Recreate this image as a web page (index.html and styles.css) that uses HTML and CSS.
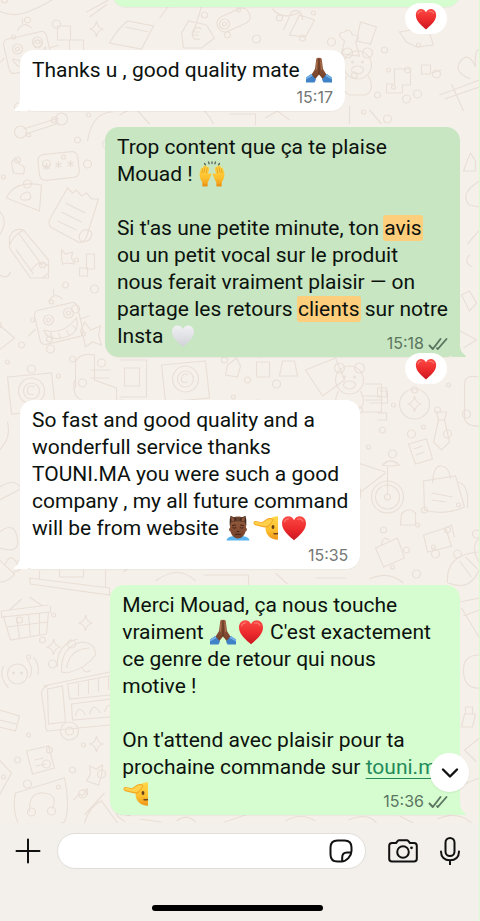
FILE: index.html
```html
<!DOCTYPE html>
<html lang="fr">
<head>
<meta charset="utf-8">
<meta name="viewport" content="width=device-width, initial-scale=1">
<title>Mouad</title>
<link rel="stylesheet" href="styles.css">
</head>
<body>
<svg class="defs" aria-hidden="true">
  <defs>
    <linearGradient id="red" x1="0" y1="0" x2="0" y2="1"><stop offset="0" stop-color="#fa4a45"/><stop offset=".5" stop-color="#ee2c2d"/><stop offset="1" stop-color="#c91620"/></linearGradient>
    <linearGradient id="white" x1="0" y1="0" x2="0" y2="1"><stop offset="0" stop-color="#f1f1f4"/><stop offset="1" stop-color="#cfd2d6"/></linearGradient>
    <linearGradient id="skin" x1="0" y1="0" x2="0" y2="1"><stop offset="0" stop-color="#9a5f3f"/><stop offset="1" stop-color="#73402a"/></linearGradient>
    <linearGradient id="gold" x1="0" y1="0" x2="0" y2="1"><stop offset="0" stop-color="#ffd849"/><stop offset=".6" stop-color="#fdbf2d"/><stop offset="1" stop-color="#ee9418"/></linearGradient>
    <symbol id="heart" viewBox="0 0 26 26"><path fill="url(#red)" d="M13 25.300C9 21.500 1 16 1 8.500C1 4.200 3.800 1.200 7.200 1.200C9.800 1.200 12 2.800 13 5.200C14 2.800 16.200 1.200 18.800 1.200C22.200 1.200 25 4.200 25 8.500C25 16 17 21.500 13 25.300Z"/><path d="M3.500 7c.5-2 2-3.200 4-3.200M16.500 4.200c2-1 4.500 0 5.500 2" fill="none" stroke="#ff8d85" stroke-width="1.200" stroke-linecap="round" opacity=".7"/></symbol>
    <symbol id="heart-white" viewBox="0 0 26 26"><path fill="url(#white)" d="M13 24C9 20.500 2 15.500 2 8.800C2 5 4.500 2.500 7.700 2.500C10 2.500 12 3.800 13 6C14 3.800 16 2.500 18.300 2.500C21.500 2.500 24 5 24 8.800C24 15.500 17 20.500 13 24Z"/></symbol>
    <symbol id="pray" viewBox="0 0 26 26">
      <path fill="url(#skin)" d="M12.800 1C11.500.2 10.400 1 10.200 2.500L9 12L5 18.500L8.500 23L13 17.500L17.500 23L21 18.500L17 12L15.800 2.500C15.600 1 14.300.2 13 1Z"/>
      <path d="M13 1.500V17.500" stroke="#522b1b" stroke-width=".9"/><path d="M11 4.500L10.300 13M15 4.500L15.700 13" stroke="#b9805b" stroke-width=".7"/>
      <path fill="#3f82c8" d="M5.200 17L10 22.500L8.500 25.500H0V20.500ZM20.800 17L16 22.500L17.500 25.500H26V20.500Z"/><path fill="#75b0e5" d="M5.200 17L0 20.500V22.500L6.500 19ZM20.800 17L26 20.500V22.500L19.500 19Z"/>
    </symbol>
    <symbol id="raised" viewBox="0 0 26 26">
      <path stroke="#59645b" stroke-width="1.300" stroke-linecap="round" d="M5.500 2.500l1 1.400M9.500 1l.6 1.800M13 .8v1.800M16.500 1l-.6 1.800M20.500 2.500l-1 1.400"/>
      <path id="raised-hand" fill="url(#gold)" d="M3.500 25.500L3 20.500C1 18 .2 15 .7 12L2 7.200C2.300 6 3.700 6.200 3.600 7.500L4.500 5C4.900 3.900 6.400 4.200 6.200 5.400L7.300 4.900C8.200 4.700 8.600 5.500 8.400 6.400L9.500 6.300C10.300 6.400 10.400 7 10.200 7.800L9 13L10.800 12.400C12.300 12.200 12.700 13.200 12 14.200C10.800 16.500 10.500 19 8.800 21L8.500 25.500Z"/>
      <use href="#raised-hand" transform="translate(26 0) scale(-1 1)"/>
      <path fill="none" stroke="#d88b18" stroke-width=".6" d="M3.600 7.500L2.900 12M6.200 5.400L5 11.500M8.400 6.400L7.200 12M22.400 7.500l.7 4.500M19.800 5.400L21 11.500M17.600 6.400l1.200 5.600M3.500 24h5M17.500 24h5"/>
    </symbol>
    <symbol id="facepalm" viewBox="0 0 26 26">
      <path fill="#59b3ee" d="M1.500 25.500C2 22.500 5 21.500 9 21H17C21 21.500 24 22.500 24.500 25.500Z"/>
      <path fill="#3d86ce" d="M8.500 21.200Q13 25.500 17.500 21.200L16.500 20H9.500Z"/>
      <path fill="url(#skin)" d="M5 8C5 3.500 8 1.500 13 1.500S21 3.500 21 8V13C22.500 13 22 16.500 20.500 16.500C19.500 20.500 16.500 23.500 13 23.500S6.500 20.500 5.500 16.500C4 16.500 3.500 13 5 13Z"/>
      <path fill="#43291f" d="M4.700 11V5L5.500.7L9.500 2.500H16.500L20.500.7L21.300 5V11L19.500 6.500H6.500Z"/>
      <path fill="#8b563b" d="M6.200 4V1.500L9.300 3.500V6H6.500ZM19.800 4V1.500L16.700 3.500V6H19.500Z"/>
      <path fill="none" stroke="#402117" stroke-width="1" stroke-linecap="round" d="M7.500 10.500l3-.4M15.500 10.100l3 .4M7.800 12.800q1.500 1 3 0M15.200 12.800q1.500 1 3 0M12 16.500q1 .6 2 0M10.500 19.500q2.500-1 5 0"/>
      <path d="M11 4h4M10.500 6h5" stroke="#985f42" stroke-width=".8"/>
    </symbol>
    <symbol id="salute" viewBox="0 0 26 26">
      <path fill="url(#gold)" d="M25 1.300C17 1.300 12.500 6.500 12.500 13S17 24.800 25 24.800Z"/>
      <path fill="#f5a623" d="M.6 8.300C.2 6.800 1.200 5.700 2.700 6L9 7.200L14 3.800C16 2.700 18.500 2.900 20.500 4.500L18 9L14.500 12.400L10.500 12.200L2.300 10.200C1.400 9.900.8 9.200.6 8.300Z"/>
      <path fill="#ffd04a" d="M1.400 7.900C1.300 7 2 6.600 2.900 6.800L9.300 8L14.300 4.700C16.200 3.700 18 3.800 19.500 4.800L17.300 8.500L14 11.200L10.500 11L2.600 9.200C2 9 1.500 8.500 1.400 7.900Z"/>
      <ellipse cx="20" cy="12" rx="1.400" ry="2" fill="#65401a"/><path d="M20.500 18.500Q22.500 19 25 18.500" fill="none" stroke="#75451a" stroke-width="1.300"/>
    </symbol>
    <symbol id="ticks" viewBox="0 0 20 14"><path fill="none" stroke="currentColor" stroke-width="1.900" stroke-linecap="round" stroke-linejoin="round" d="M1.500 8.500L4.800 12L12.500 2M9 11.200L9.800 12L18.500 2"/></symbol>

    <g id="star"><path d="M0-8Q1-1 7 0Q1 1 0 8Q-1 1-7 0Q-1-1 0-8Z"/></g>
    <g id="paper"><path d="M-8-25l5 5 4-3 5 6 5-3 5 6 7 0L11 24Q7 33-1 27L-25 14Q-28 9-25 5ZM-10-10L10 0M-14-1L6 9M-18 8L1 17M8 17q10-1 8 6t-11 5q-4-6 3-11"/></g>
    <g id="pencil"><path d="M-22-18Q-18-28-8-25L17 5V23H-1L-22-7ZM-13-22L11 11M-22-10Q-18-20-8-25M-16-6L2 19M0 15Q8 3 17 11M11 23l6-5"/></g>
    <g id="robot"><rect x="-22" y="-16" width="44" height="35" rx="5" transform="rotate(-13)"/><circle cx="-10" cy="-2" r="5"/><circle cx="10" cy="-9" r="5"/><circle cx="-10" cy="-2" r="2"/><circle cx="10" cy="-9" r="2"/><path d="M-15 8Q4 14 18-4Q22 13 3 16Q-11 19-15 8M-8 10l2 6M0 11l2 5M8 8l3 6M14 3l4 5M-10-20Q-5-31 4-23M-5-27v-6M-23 7l-7 7M22-3l9-3"/></g>
    <g id="bone"><path d="M-18 8L17-3M-16 13L18 2"/><circle cx="-21" cy="11" r="6"/><circle cx="20" cy="-2" r="6"/><circle cx="-23" cy="-14" r="4"/></g>
    <g id="password"><rect x="-20" y="-12" width="40" height="26" rx="6" transform="rotate(-6)"/><path d="M-12-2v7M-15 0l6 4M-9 0l-6 4M0-4v7M-3-2l6 4M3-2l-6 4M12-5v7M9-3l6 4M15-3l-6 4"/></g>
    <g id="truck"><path d="M-38-18L38-34V20L-34 27Q-36 26-36 18L-40-10Q-40-16-34-18ZM-34-15l15-3 3 36-17 2ZM-14-20L38-30V-10L-12-5ZM-10 0L38-6V12L-9 16ZM-3-21v13M7-23v13M17-25v13M27-27v13M-6 12q3-13 10-1M8 10q4-13 11-1M23 8q4-13 11-1"/><circle cx="-12" cy="27" r="9"/><circle cx="-12" cy="27" r="4"/></g>
    <g id="basket"><path d="M-25-6L22-12M-25-6v6L24-5v-6M-23 0L-16 23L20 17L22-5M-20 10L21 5M-10 0l3 21M2-2l2 21M13-4v22M-17-7L-5-18M16-11L3-20"/></g>
    <g id="bag"><path d="M-20-12L12-17L21 14Q0 23-19 17ZM-11-10Q-10-28-2-27T7-14M14-11q12 2 10 26M-12 0L9 4M-12 7L3 9"/></g>
    <g id="camera-doodle"><path d="M-24-14L20-18L24 19L-20 23Z"/><circle r="13"/><circle r="8"/><path d="M3-4q-6-3-7 3t6 4"/></g>
    <g id="bike"><circle cx="17" cy="20" r="16"/><circle cx="17" cy="20" r="12"/><circle cx="17" cy="20" r="3"/><circle cx="-26" cy="17" r="16"/><path d="M17 18V-10M15-5L-16-15L-10 15L15-4M-10 15L-26 17L-15-15M-20-17h9M12-12Q20-20 29-12Q20-10 12-12Z"/></g>
    <g id="pizza"><path d="M-18 0Q-10-18 17-13L15 13ZM-3-3q7-6 9 0t-8 5q-4-1-1-5"/></g>
    <g id="taco"><path d="M-16 13Q-17-13 5-17Q18-16 18-4Q9 9-10 14ZM-20 8Q-22-14 0-20M-11 9Q-8-10 12-11M4 8q4 8 9 3"/></g>
    <g id="bear"><circle cy="0" r="14"/><circle cx="-10" cy="-12" r="5"/><circle cx="10" cy="-12" r="5"/><ellipse cy="5" rx="6" ry="4"/><circle cx="-5" cy="-3" r="1"/><circle cx="5" cy="-3" r="1"/><path d="M-11 11Q-18 25-8 30H8Q18 25 11 11"/></g>
    <g id="bubble-doodle"><path d="M-24-9L25-24Q31 6 25 20Q0 29-20 25Q-28 6-24-9ZM-10 10Q-11-10 4-9T13 7"/><circle cx="-8" cy="10" r="4"/><circle cx="12" cy="9" r="4"/></g>
    <g id="tag"><rect x="-17" y="-8" width="34" height="16" rx="7" transform="rotate(-24)"/><circle cx="-9" cy="4" r="5"/><circle cx="-9" cy="4" r="2"/></g>
    <g id="tie"><path d="M-5-18h10l-2 8 5 22-8 8-8-8 5-22Z M-4-10h7"/></g>
    <g id="dots"><circle cx="-25" cy="-20" r="3"/><circle cx="9" cy="-25" r="2"/><circle cx="27" cy="4" r="4"/><circle cx="-16" cy="17" r="2"/><circle cx="8" cy="24" r="4"/><circle cx="-2" cy="0" r="3"/></g>
  </defs>
</svg>

<main class="chat">
  <svg class="wallpaper" viewBox="0 0 480 823" preserveAspectRatio="xMidYMin slice" aria-hidden="true">
    <path d="M-2 10Q12 18 28 12T57-3M87 12l22-12M90 17L108 4M58 26h13v14h13v12H70V40H58ZM110 43q8-14 18-22l26 5-12 23ZM126 27l23 5M160 18l14-18 28 7-8 25M182 33l7-12 18 4 8 13-13 10H184ZM202 29q-8-4-9 4t8 6M192 32h8M192 35h7M284 30l8-18q10-5 11 8M273 9q10 12 28 3M290 35l10-20 15 5-9 17ZM361 22l16 5-6 17-14-3ZM345 41q-10-8 0-9 5-5 8 3 10 0 3 7l4 14-18-2ZM400 32l28-5 6 18-17 2-10-5ZM395 69h16v16h-8v8h-16v-9h8ZM422 65h9v9h-9ZM432 73l10-3M440 95l40-15M445 99l35-12M452 84l12 27M471 79q-20-8-8-20 7-6 13 8Q475 48 480 50"/>
    <use href="#star" x="97" y="29"/><use href="#tag" x="234" y="20"/><use href="#bear" x="358" y="65"/><use href="#robot" x="28" y="51"/>
    <use href="#bone" x="42" y="121"/><use href="#password" x="59" y="165"/><use href="#paper" x="76" y="213"/><use href="#pizza" x="25" y="198"/><use href="#pencil" x="32" y="255"/><use href="#robot" x="59" y="322"/><use href="#camera-doodle" x="32" y="391"/>
    <path d="M12 162l4-4 5 7q6 1 3 9l-10-1ZM88 141q5-29 25-29M0 211q10 11-1 25M0 275q8 5 11-3M0 325l15 13-15 12M62 250l4 4 7-2-1 6 3 6-7-1-5 1-1-6ZM87 254h8v15h-8ZM80 268h8v8h-8ZM81 331l4-9 6 8 10-4-2 9 3 10-9-3-7 5-2-9ZM76 388V362q4-10 19-7v25l22 8v17M75 380q-4 22 17 22l32-2M91 370h20M91 378h19"/>
    <path d="M120 115l15-8 15 17M180 111q20-15 34 13M230 114h26v11M266 118l12-7 12 9M350 106v18M370 110l12 14M468 160l3-7 5 8v10h-12ZM480 181q-21 13-10 24l10 2M462 295l8-4 7 12-7 8ZM480 230l-12 14M459 330l18 10-13 8M470 255q-7 7 3 12"/>
    <path d="M120 360h27v37h-27M125 368h15v18h-15ZM228 365l9-7 4 8-3 11-12-2ZM257 362h13v15h-13ZM283 361h12l3 15h-18ZM306 370l30-12 9 22-22 16ZM365 384h17v16h-17M382 350l13 5M380 391h8v12h-18"/>
    <use href="#camera-doodle" x="186" y="379"/><use href="#bear" x="350" y="380"/><circle cx="415" cy="404" r="15"/><use href="#star" x="415" y="404"/><use href="#tie" x="442" y="430"/>
    <path d="M362 396h20v16h-20M378 388h9v9h-9ZM378 413h9v7h-9M479 377q-14-3-14 8v34q3 8 15 7M409 444l18-5 6 20-17 5ZM414 449l9-3M416 455l9-3M402 514q7-8 14-1v12h-15ZM376 548l22-10 7 20-21 9ZM382 545q1-10 8-5M424 535l22-7 6 18-24 6ZM446 528l6-3 3 12"/>
    <use href="#bike" x="371" y="477"/><use href="#bag" x="444" y="493"/><path d="M448 583q-2-29 31-31M449 583q22 9 31-14M460 561l12 16M466 557l12 12M480 563q-10-17 0-25"/>
    <path d="M0 487q14-9 21 0M0 500l21-11M0 450q12-12 8-28M0 532q16-12 18 8 2 14-18 8M5 566q7-18 15 3M18 560q10 9-4 12M0 560l15 14q-6 8-15 8M30 578l80 10v7L31 584ZM40 571v8M106 570v17M60 570v7h24v-7M124 572l7-6M156 581q23-17 40 0M204 575h45v10M276 573l12 11M316 578h31M370 579q19-9 34 4"/>
    <use href="#basket" x="27" y="617"/><use href="#taco" x="78" y="659"/><circle cx="18" cy="674" r="10"/><circle cx="14" cy="673" r="1"/><circle cx="22" cy="673" r="1"/><path d="M4 666q-5 11 5 22M28 660q7 9 2 18M34 657q7 9 4 18"/><use href="#star" x="86" y="623"/><use href="#star" x="54" y="647"/><use href="#truck" x="82" y="704"/>
    <path d="M0 710l20 6-4 15-16-4M0 720l17 4M27 751l22-5 6 22-22 6ZM35 760l9-2M36 766l11-2M90 766l7 3 6-4-1 11-3 9-12-4 4-7ZM74 800l6-6 3 2 5-8M83 790h5v5M85 815l20-22M0 760l12 13-12 22M460 602l20-4M462 608l18 30M464 616l16-6M480 655q-17 0-16 17t16 16M465 714h11l-3 13h-11ZM466 714v-7h7v7M480 738l-15 12 12 12M465 784l15-6"/>
    <use href="#star" x="97" y="744"/><use href="#bubble-doodle" x="40" y="802"/><path d="M85 823q5-17 17-22l16 22M126 822q-20-13 5-6M140 819l22 3M177 821q10-8 19 1M225 822l21-7M286 821q15-9 30 0M349 820q20-8 28 3M400 816l14 7M438 819q20-9 34 4"/>
    <use href="#dots" x="30" y="20"/><use href="#dots" x="230" y="35"/><use href="#dots" x="305" y="38"/><use href="#dots" x="410" y="70"/><use href="#dots" x="380" y="95"/><use href="#dots" x="20" y="160"/><use href="#dots" x="80" y="140"/><use href="#dots" x="68" y="285"/><use href="#dots" x="24" y="345"/><use href="#dots" x="75" y="359"/><use href="#dots" x="250" y="380"/><use href="#dots" x="385" y="430"/><use href="#dots" x="440" y="410"/><use href="#dots" x="450" y="530"/><use href="#dots" x="409" y="550"/><use href="#dots" x="45" y="640"/><use href="#dots" x="75" y="770"/><use href="#dots" x="20" y="760"/>
  </svg>

  <div class="row sent reacted">
    <div class="bubble earlier"></div>
    <span class="reaction"><svg role="img" aria-label="❤️"><use href="#heart"/></svg></span>
  </div>

  <article class="row received">
    <div class="bubble">
      <svg class="tail" viewBox="0 0 14 12" aria-hidden="true"><path d="M6 0H14V12H1Q-1 11 1 10Q6 7 6 0Z"/></svg>
      <p>Thanks u , good quality mate <svg class="emoji" role="img" aria-label="🙏🏾"><use href="#pray"/></svg></p>
      <footer><time>15:17</time></footer>
    </div>
  </article>

  <article class="row sent reacted">
    <div class="bubble selected">
      <svg class="tail" viewBox="0 0 14 12" aria-hidden="true"><path d="M6 0H14V12H1Q-1 11 1 10Q6 7 6 0Z"/></svg>
      <p>Trop content que ça te plaise<br>Mouad ! <svg class="emoji" role="img" aria-label="🙌"><use href="#raised"/></svg><br><br>Si t'as une petite minute, ton <mark>avis</mark><br>ou un petit vocal sur le produit<br>nous ferait vraiment plaisir — on<br>partage les retours <mark>clients</mark> sur notre<br>Insta <svg class="emoji" role="img" aria-label="🤍"><use href="#heart-white"/></svg></p>
      <footer><time>15:18</time><svg class="ticks" role="img" aria-label="Distribué"><use href="#ticks"/></svg></footer>
    </div>
    <span class="reaction"><svg role="img" aria-label="❤️"><use href="#heart"/></svg></span>
  </article>

  <article class="row received">
    <div class="bubble">
      <svg class="tail" viewBox="0 0 14 12" aria-hidden="true"><path d="M6 0H14V12H1Q-1 11 1 10Q6 7 6 0Z"/></svg>
      <p>So fast and good quality and a<br>wonderfull service thanks<br>TOUNI.MA you were such a good<br>company , my all future command<br>will be from website <svg class="emoji" role="img" aria-label="💆🏾‍♂️"><use href="#facepalm"/></svg><svg class="emoji" role="img" aria-label="🫡"><use href="#salute"/></svg><svg class="emoji" role="img" aria-label="❤️"><use href="#heart"/></svg></p>
      <footer><time>15:35</time></footer>
    </div>
  </article>

  <article class="row sent">
    <div class="bubble">
      <svg class="tail" viewBox="0 0 14 12" aria-hidden="true"><path d="M6 0H14V12H1Q-1 11 1 10Q6 7 6 0Z"/></svg>
      <p>Merci Mouad, ça nous touche<br>vraiment <svg class="emoji" role="img" aria-label="🙏🏾"><use href="#pray"/></svg><svg class="emoji" role="img" aria-label="❤️"><use href="#heart"/></svg> C'est exactement<br>ce genre de retour qui nous<br>motive !<br><br>On t'attend avec plaisir pour ta<br>prochaine commande sur <a href="#touni">touni.ma</a><br><svg class="emoji" role="img" aria-label="🫡"><use href="#salute"/></svg></p>
      <footer><time>15:36</time><svg class="ticks" role="img" aria-label="Distribué"><use href="#ticks"/></svg></footer>
    </div>
  </article>

  <button class="scroll-down" type="button" aria-label="Aller en bas"><svg viewBox="0 0 18 12"><path d="M2 2.500L9 9.500L16 2.500"/></svg></button>
</main>

<form class="composer">
  <div class="controls">
    <button class="plain" type="button" aria-label="Joindre"><svg class="plus" viewBox="0 0 26 26"><path d="M13 1.500V24.500M1.500 13H24.500"/></svg></button>
    <div class="field">
      <input type="text" aria-label="Message">
      <button class="plain" type="button" aria-label="Autocollants"><svg class="sticker" viewBox="0 0 24 24"><path d="M8.500 1.500H15.500Q22.500 1.500 22.500 8.500V12C22.500 17 17.500 22.500 12.500 22.500H8.500Q1.500 22.500 1.500 15.500V8.500Q1.500 1.500 8.500 1.500ZM13.200 22.200V18.500Q13.200 13.500 18 13.500H22.200"/></svg></button>
    </div>
    <button class="plain" type="button" aria-label="Appareil photo"><svg class="camera" viewBox="0 0 30 24"><path d="M4 4H8L9.800 1.800Q10.300 1.200 11 1.200H19Q19.700 1.200 20.200 1.800L22 4H26Q28.800 4 28.800 6.800V19.800Q28.800 22.600 26 22.600H4Q1.200 22.600 1.200 19.800V6.800Q1.200 4 4 4Z"/><circle cx="15" cy="13" r="5.800"/><circle class="dot" cx="23.500" cy="8.800" r="1.400"/></svg></button>
    <button class="plain" type="button" aria-label="Message vocal"><svg class="mic" viewBox="0 0 20 28"><rect x="5.500" y="1" width="9" height="18" rx="4.500"/><path d="M1 14.500C1 20 4.500 23.200 10 23.200S19 20 19 14.500M10 23.200V27.500"/></svg></button>
  </div>
  <div class="home-bar"></div>
</form>
</body>
</html>
```
FILE: styles.css
```css
* { box-sizing: border-box; }

body {
  display: flex;
  flex-direction: column;
  min-height: 100vh;
  margin: 0;
  overflow: hidden;
  border-right: 1px solid #dcfbd2;
  background: #f3efea;
  color: #0c120e;
  font-family: Roboto, "Liberation Sans", sans-serif;
  font-size: 21px;
  line-height: 27px;
}

.defs { position: absolute; width: 0; height: 0; }

.chat {
  position: relative;
  display: flex;
  flex: 1 0 auto;
  flex-direction: column;
  gap: 16px;
  padding: 0 19px 8px 20px;
  overflow: hidden;
  background: #f5f1ea;
}

.wallpaper {
  position: absolute;
  inset: 0;
  width: 100%;
  height: 100%;
  fill: none;
  stroke: #e9dfd7;
  stroke-width: 1.2;
}

.row {
  position: relative;
  display: flex;
}

.sent { justify-content: flex-end; }
.reacted { margin-bottom: 27px; }

.bubble {
  --fill: #fff;
  position: relative;
  padding: 7px 12px 0;
  border-radius: 14px;
  background: var(--fill);
  box-shadow: 0 1px 1px #0000000a;
  white-space: nowrap;
}

.sent .bubble { --fill: #d6fdd0; }
.sent .selected { --fill: #c7e6c1; }

.earlier {
  width: 79%;
  height: 30px;
  margin-top: -23px;
}

.tail {
  position: absolute;
  bottom: 0;
  left: -6px;
  width: 14px;
  height: 12px;
  fill: var(--fill);
}

.sent .tail {
  right: -6px;
  left: auto;
  transform: scaleX(-1);
}

.bubble p {
  position: relative;
  margin: 0;
}

.sent p { margin-bottom: -20px; }

.emoji {
  width: 26px;
  height: 26px;
  margin: 0 1px;
  vertical-align: -6px;
}

mark {
  margin: 0 -1px;
  padding: 1px;
  border-radius: 3px;
  background: #fdce7b;
  color: inherit;
}

a {
  color: #238a5b;
  text-decoration-thickness: 1px;
  text-underline-offset: 4px;
}

.bubble footer {
  position: relative;
  display: flex;
  align-items: center;
  justify-content: flex-end;
  gap: 4px;
  height: 27px;
  color: #747775;
  font-family: Inter, "Liberation Sans", sans-serif;
  font-size: 16px;
}

.sent footer { color: #5c7560; }

.ticks {
  width: 20px;
  height: 14px;
}

.reaction {
  position: absolute;
  right: 13px;
  bottom: -27px;
  display: grid;
  place-items: center;
  width: 42px;
  height: 31px;
  border-radius: 16px;
  background: #fff;
}

.reaction svg { width: 22px; height: 22px; }

button {
  display: grid;
  place-items: center;
  padding: 0;
  border: 0;
  color: #111;
}

button svg {
  fill: none;
  stroke: currentColor;
  stroke-linecap: round;
  stroke-linejoin: round;
  stroke-width: 2;
}

.scroll-down {
  position: absolute;
  right: 10px;
  bottom: 31px;
  width: 39px;
  height: 39px;
  border-radius: 50%;
  background: #fff;
  box-shadow: 0 1px 2px #00000014;
}

.scroll-down svg { width: 18px; height: 12px; stroke-width: 2.4; }

.composer {
  position: relative;
  display: flex;
  flex-direction: column;
  gap: 36px;
  margin: 0;
  padding: 10px 19px 10px 15px;
}

.controls {
  display: flex;
  align-items: center;
}

.plain {
  flex: none;
  background: none;
}

.field {
  display: flex;
  flex: 1;
  align-items: center;
  min-width: 0;
  height: 36px;
  margin: 0 22px 0 16px;
  padding: 0 12px 0 16px;
  border: 1px solid #e1deda;
  border-radius: 18px;
  background: #fff;
}

.field input {
  flex: 1;
  width: 100%;
  min-width: 0;
  padding: 0;
  border: 0;
  outline: 0;
  background: none;
  font: inherit;
}

.plus { width: 26px; height: 26px; }
.sticker { width: 24px; height: 24px; }
.camera { width: 30px; height: 24px; margin-right: 22px; }
.mic { width: 20px; height: 28px; }
.camera .dot { fill: currentColor; stroke: none; }

.home-bar {
  align-self: center;
  width: 36%;
  min-width: 171px;
  height: 6px;
  border-radius: 3px;
  background: #000;
}
```
